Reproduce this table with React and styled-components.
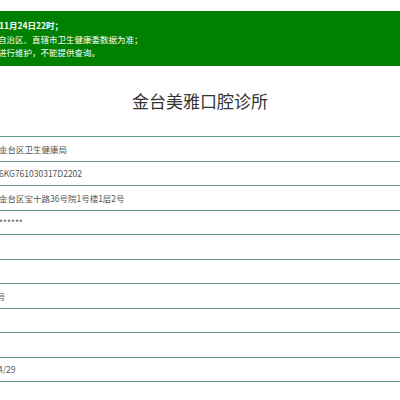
import React from "react";
import styled, { createGlobalStyle } from "styled-components";

const GlobalStyle = createGlobalStyle`
  html, body {
    margin: 0;
    padding: 0;
    background: #fff;
    overflow: hidden;
  }
  body {
    font-family: "Noto Sans CJK SC", "Noto Sans", "Liberation Sans", sans-serif;
  }
`;

const Page = styled.div`
  width: 400px;
  height: 400px;
  overflow: hidden;
  padding-top: 11px;
  box-sizing: border-box;
`;

const Notice = styled.div`
  background: #008000;
  color: #fff;
  height: 55px;
  box-sizing: border-box;
  padding-top: 8px;
  font-size: 8.5px;
  line-height: 13.5px;
`;

const NoticeLine = styled.div`
  white-space: nowrap;
  text-indent: ${({ $cut }) => $cut || 0}px;
  font-weight: ${({ $bold }) => ($bold ? 700 : 400)};
`;

const Title = styled.h1`
  margin: 0;
  height: 70px;
  display: flex;
  align-items: center;
  justify-content: center;
  font-size: 17px;
  font-weight: 400;
  color: #333;
  padding-bottom: 2px;
  box-sizing: border-box;
`;

const InfoTable = styled.div`
  display: flex;
  flex-direction: column;
  border-top: 1px solid #649f81;
`;

const InfoRow = styled.div`
  height: 23.5px;
  border-bottom: 1px solid #649f81;
  display: flex;
  align-items: center;
  font-size: 8.5px;
  color: #555;
  white-space: nowrap;
  overflow: hidden;
`;

const Value = styled.span`
  margin-left: ${({ $cut }) => $cut || 0}px;
`;

const rows = [
  { text: "金台区卫生健康局", cut: -1 },
  { text: "6KG761030317D2202", cut: -1 },
  { text: "金台区宝十路36号院1号楼1层2号", cut: -1 },
  { text: "******", cut: -1 },
  { text: "" },
  { text: "" },
  { text: "号", cut: -3 },
  { text: "" },
  { text: "" },
  { text: "4/29", cut: -2 },
  { text: "" },
];

const App = () => (
  <>
    <GlobalStyle />
    <Page>
      <Notice>
        <NoticeLine $bold $cut={-1}>11月24日22时；</NoticeLine>
        <NoticeLine $cut={-2}>自治区、直辖市卫生健康委数据为准；</NoticeLine>
        <NoticeLine $cut={-2}>进行维护，不能提供查询。</NoticeLine>
      </Notice>
      <Title>金台美雅口腔诊所</Title>
      <InfoTable>
        {rows.map((r, i) => (
          <InfoRow key={i}>
            <Value $cut={r.cut}>{r.text}</Value>
          </InfoRow>
        ))}
      </InfoTable>
    </Page>
  </>
);

export default App;
